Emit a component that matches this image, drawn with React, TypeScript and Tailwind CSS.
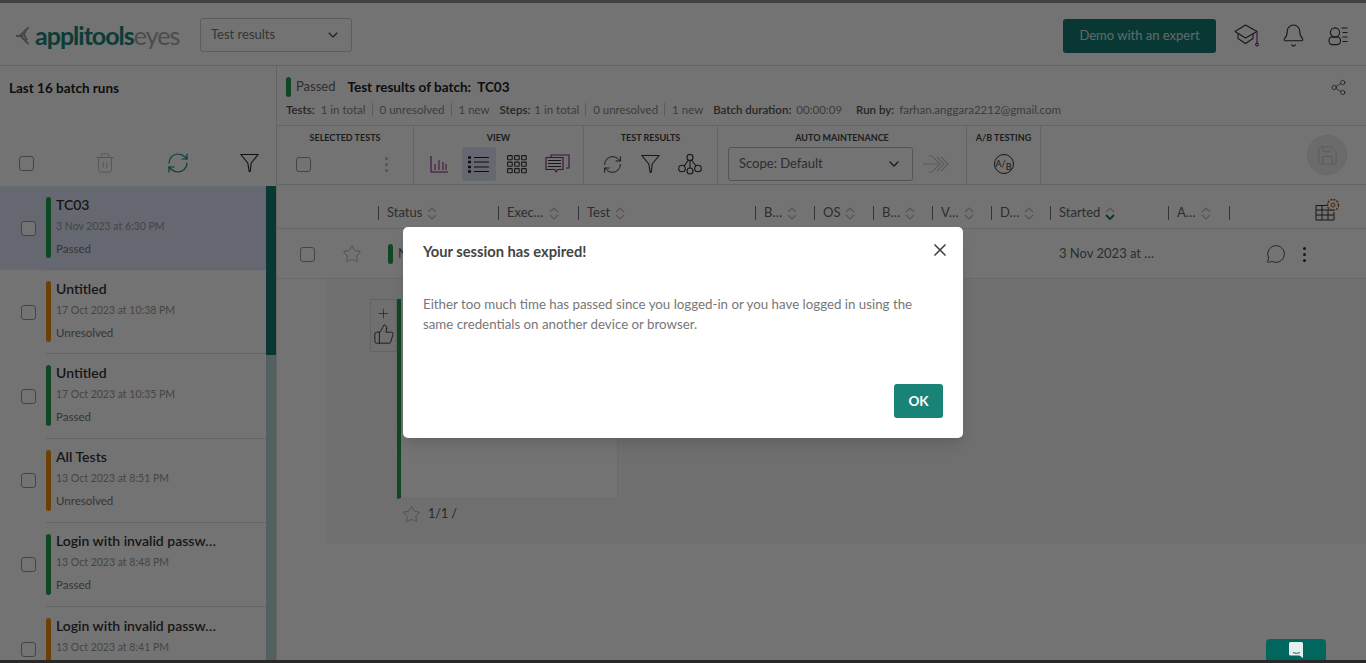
import { Bell, ChevronDown, MessageCircle, Plus, RefreshCw, Save, Share2, Star, ThumbsUp, Trash2, X } from "lucide-react"

interface Batch {
    name: string;
    date: string;
    status: "Passed" | "Unresolved";
}

const batches: Batch[] = [
    { name: "TC03", date: "3 Nov 2023 at 6:30 PM", status: "Passed" },
    { name: "Untitled", date: "17 Oct 2023 at 10:38 PM", status: "Unresolved" },
    { name: "Untitled", date: "17 Oct 2023 at 10:35 PM", status: "Passed" },
    { name: "All Tests", date: "13 Oct 2023 at 8:51 PM", status: "Unresolved" },
    { name: "Login with invalid passw…", date: "13 Oct 2023 at 8:48 PM", status: "Passed" },
    { name: "Login with invalid passw…", date: "13 Oct 2023 at 8:41 PM", status: "Unresolved" },
]

const columns = [
    { label: "Status", width: "w-[120px]" },
    { label: "Exec…", width: "w-[80px]" },
    { label: "Test", width: "w-[177px]" },
    { label: "B…", width: "w-[59px]" },
    { label: "OS", width: "w-[59px]" },
    { label: "B…", width: "w-[59px]" },
    { label: "V…", width: "w-[59px]" },
    { label: "D…", width: "w-[59px]" },
    { label: "Started", width: "w-[118px]", active: true },
    { label: "A…", width: "w-[61px]" },
]

const Check = ({ className = "" }: { className?: string }) => (
    <span className={`block w-[15px] h-[15px] rounded-[3px] border border-[#999] bg-white shrink-0 ${className}`} />
)

const Dots = ({ color = "bg-[#333]" }: { color?: string }) => (
    <span className="flex flex-col gap-[3px]">
        <i className={`block w-[3px] h-[3px] rounded-full ${color}`} />
        <i className={`block w-[3px] h-[3px] rounded-full ${color}`} />
        <i className={`block w-[3px] h-[3px] rounded-full ${color}`} />
    </span>
)

const Sort = ({ active }: { active?: boolean }) => (
    <svg width="10" height="13" viewBox="0 0 10 13" fill="none" className="ml-[5px] shrink-0">
        <path d="M1 5l4-4 4 4" stroke="#bbb" strokeWidth="1.2" />
        <path d="M1 8l4 4 4-4" stroke={active ? "#0f7a72" : "#bbb"} strokeWidth={active ? 1.8 : 1.2} />
    </svg>
)

const Section = ({ title, width, children }: { title: string; width: string; children: React.ReactNode }) => (
    <div className={`${width} shrink-0 border-r border-[#ddd] flex flex-col items-center pt-[6px]`}>
        <div className="text-[9px] leading-[12px] font-bold text-[#444]">{title}</div>
        <div className="flex-1 w-full flex items-center justify-center">{children}</div>
    </div>
)

const Stat = ({ children, last }: { children: React.ReactNode; last?: boolean }) => (
    <span className={`text-[#888] ${last ? "" : "border-r border-[#ccc] pr-[6px] mr-[7px]"}`}>{children}</span>
)

const FunnelIcon = ({ color }: { color: string }) => (
    <svg width="19" height="20" viewBox="0 0 19 20" fill="none" stroke={color} strokeWidth="1.1" strokeLinejoin="round">
        <path d="M0.8 1.5h17.4l-7 8.5-1 8.5h-1l-1.4-8.5z" />
    </svg>
)

const ChartIcon = () => (
    <svg width="19" height="18" viewBox="0 0 19 18" fill="none" stroke="#b0289a" strokeWidth="1.1">
        <path d="M1 1v16h17" stroke="#8a1f88" /><path d="M5 9v6M9 5v10M13 7v8M16 9v6" />
    </svg>
)

const ListIcon = () => (
    <svg width="21" height="17" viewBox="0 0 21 17" fill="none" stroke="#222" strokeWidth="1.2">
        <path d="M6 1.5h15M6 6h15M6 11h15M6 15.5h15" />
        <path d="M0 1.5h3M0 6h3M0 11h3M0 15.5h3" strokeWidth="2.4" />
    </svg>
)

const GridIcon = () => (
    <svg width="20" height="19" viewBox="0 0 20 19" fill="none" stroke="#333" strokeWidth="1.1">
        {[0.6, 7.6, 14.6].map((x) =>
            [0.6, 7.1, 13.6].map((y) => <rect key={`${x}-${y}`} x={x} y={y} width="4.6" height="4.2" rx="0.6" />)
        )}
    </svg>
)

const CommentsIcon = () => (
    <svg width="25" height="20" viewBox="0 0 25 20" fill="none" strokeWidth="1.1">
        <path d="M6 3V1h18v13h-3" stroke="#8a1f88" />
        <path d="M1 3.5h17v12h-5l-2 2.5-1-2.5H1z" stroke="#8a1f88" fill="white" />
        <path d="M3 6.5h13M3 9.5h13M3 12.5h13" stroke="#333" />
    </svg>
)

const FlowIcon = () => (
    <svg width="24" height="21" viewBox="0 0 24 21" fill="none" stroke="#333" strokeWidth="1.1">
        <circle cx="12" cy="3.5" r="3" /><circle cx="4" cy="14.5" r="3.3" /><circle cx="12" cy="17" r="3" /><circle cx="20" cy="14.5" r="3.3" />
        <path d="M10.5 6L6 12M13.5 6l4.5 6M12 6.5V14" />
    </svg>
)

const ArrowsIcon = () => (
    <svg width="28" height="20" viewBox="0 0 28 20" fill="none" stroke="#c8c8c8" strokeWidth="1.1">
        <path d="M0 10h15M10 3l7 7-7 7M14 3l7 7-7 7M18 3l7 7-7 7M6 2h4M6 18h4" />
    </svg>
)

const AbIcon = () => (
    <span className="flex items-center justify-center w-[20px] h-[20px] rounded-full border border-[#333] text-[#333] text-[9px] leading-none">
        <span className="-translate-y-[1px]">A/</span>
        <span className="translate-y-[2px]">B</span>
    </span>
)

const CapIcon = () => (
    <svg width="25" height="23" viewBox="0 0 25 23" fill="none" strokeWidth="1.1">
        <path d="M11.5 1L23 7.5 11.5 14 1 7.5z" stroke="#333" strokeLinejoin="round" />
        <path d="M4 10v4.5l7.5 5 7.5-5V10" stroke="#333" />
        <path d="M23 7.5V19" stroke="#8a1f88" />
        <circle cx="23" cy="20.5" r="1.4" stroke="#8a1f88" />
    </svg>
)

const UserListIcon = () => (
    <svg width="20" height="20" viewBox="0 0 20 20" fill="none" stroke="#333" strokeWidth="1.1">
        <circle cx="7" cy="6.5" r="4.6" /><rect x="1" y="11" width="11.5" height="7.6" rx="3.5" />
        <path d="M13.5 2h6M14.5 6.5h5M14.5 11h5M14.5 15.5h5" />
    </svg>
)

const TableGearIcon = () => (
    <svg width="25" height="23" viewBox="0 0 25 23" fill="none" stroke="#333" strokeWidth="1">
        <path d="M1 7.5h11M1 7.5V22h18V14M1 12h18M1 17h18M7 7.5V22M13 12v10" />
        <circle cx="18" cy="7" r="2" stroke="#a85a20" />
        <circle cx="18" cy="7" r="5.5" stroke="#a85a20" strokeDasharray="2.2 1" strokeWidth="1.4" />
    </svg>
)

const LogoMark = () => (
    <svg width="15" height="20" viewBox="0 0 15 20" fill="none" stroke="#9a9a9a" strokeWidth="1.8">
        <path d="M13.5 1.5L5 9.5l8.5 8.5M1 10h7M11 3.5L9 9l3 5" />
    </svg>
)

const App: React.FC = () => {
    return (
        <div className="relative h-[663px] w-[1366px] overflow-hidden bg-white flex flex-col font-['Lato','Liberation_Sans',sans-serif] text-[#333]">
            <div className="h-[3px] shrink-0 bg-[#8a8f96]" />

            <header className="h-[63px] shrink-0 border-b border-[#ddd] flex items-center pt-[3px] pl-[15px] pr-[18px]">
                <LogoMark />
                <div className="ml-[5px] flex items-baseline text-[25px] leading-none tracking-[-1px] w-[146px]">
                    <span className="font-bold text-[#17857d]">applitools</span>
                    <span className="text-[#a8a8a8]">eyes</span>
                </div>
                <div className="ml-[19px] -mt-[2px] w-[152px] h-[34px] border border-[#ccc] rounded-[3px] flex items-center justify-between pl-[10px] pr-[10px] text-[13px] text-[#777]">
                    Test results
                    <ChevronDown size={16} strokeWidth={1.6} className="text-[#444]" />
                </div>
                <button className="ml-auto w-[153px] h-[34px] bg-[#147d74] text-[#d6ebe8] text-[13px] rounded-[3px]">Demo with an expert</button>
                <span className="ml-[18px]"><CapIcon /></span>
                <Bell size={25} strokeWidth={1} className="ml-[22px] text-[#333]" />
                <span className="ml-[22px]"><UserListIcon /></span>
            </header>

            <div className="flex flex-1 min-h-0">
                <aside className="w-[277px] shrink-0 border-r border-[#ddd] flex flex-col">
                    <div className="h-[120px] shrink-0 flex flex-col justify-between">
                        <div className="pl-[9px] pt-[12px] text-[13.5px] font-bold text-[#222]">Last 16 batch runs</div>
                        <div className="flex items-center pl-[19px] pb-[11px]">
                            <Check />
                            <Trash2 size={22} strokeWidth={1} className="text-[#bbb] ml-[60px]" />
                            <RefreshCw size={24} strokeWidth={1.2} className="text-[#17857d] ml-[50px]" />
                            <span className="ml-[50px]"><FunnelIcon color="#222" /></span>
                        </div>
                    </div>
                    <div className="flex flex-1 min-h-0">
                        <ul className="flex-1 overflow-hidden">
                            {batches.map((batch, i) => (
                                <li key={batch.date} className={`h-[84.2px] flex items-center ${i === 0 ? "bg-[#dfe7f8]" : ""}`}>
                                    <Check className="ml-[21px]" />
                                    <div className="ml-[10px] flex-1 h-full border-b border-[#ddd] flex items-center">
                                        <span className={`w-[5px] h-[61px] rounded-[3px] ${batch.status === "Passed" ? "bg-[#1f9e4a]" : "bg-[#ef8e0c]"}`} />
                                        <div className="ml-[5px] mb-[4px]">
                                            <div className="text-[14px] leading-[18px] font-semibold text-[#333]">{batch.name}</div>
                                            <div className="mt-[5px] text-[10.5px] leading-[14px] text-[#999]">{batch.date}</div>
                                            <div className="mt-[9px] text-[11.5px] leading-[14px] text-[#777]">{batch.status}</div>
                                        </div>
                                    </div>
                                </li>
                            ))}
                        </ul>
                        <div className="w-[10px] shrink-0 bg-[#b9d6d4]">
                            <div className="h-[169px] bg-[#147d74]" />
                        </div>
                    </div>
                </aside>

                <main className="flex-1 min-w-0 flex flex-col">
                    <div className="h-[60px] shrink-0 border-b border-[#ddd] pl-[9px] pr-[19px]">
                        <div className="flex items-center pt-[11px] h-[31px]">
                            <span className="w-[5px] h-[20px] rounded-[3px] bg-[#1f9e4a]" />
                            <span className="ml-[5px] text-[13px] text-[#666]">Passed</span>
                            <span className="ml-[12px] text-[13.5px] font-bold text-[#222]">Test results of batch:&nbsp; TC03</span>
                            <Share2 size={17} strokeWidth={1} className="ml-auto text-[#333]" />
                        </div>
                        <div className="flex items-center mt-[6px] text-[11.5px] leading-[13px]">
                            <b className="font-semibold text-[#555] mr-[6px]">Tests:</b>
                            <Stat>1 in total</Stat><Stat>0 unresolved</Stat><Stat last>1 new</Stat>
                            <b className="font-semibold text-[#555] ml-[10px] mr-[4px]">Steps:</b>
                            <Stat>1 in total</Stat><Stat>0 unresolved</Stat><Stat last>1 new</Stat>
                            <b className="font-semibold text-[#555] ml-[10px] mr-[5px]">Batch duration:</b>
                            <Stat last>00:00:09</Stat>
                            <b className="font-semibold text-[#555] ml-[14px] mr-[5px]">Run by:</b>
                            <Stat last>farhan.anggara2212@gmail.com</Stat>
                        </div>
                    </div>

                    <div className="h-[59px] shrink-0 border-b border-[#ddd] flex items-stretch">
                        <Section title="SELECTED TESTS" width="w-[137px]">
                            <div className="w-full flex items-center justify-between pl-[19px] pr-[25px]">
                                <Check />
                                <Dots color="bg-[#bbb]" />
                            </div>
                        </Section>
                        <Section title="VIEW" width="w-[170px]">
                            <div className="flex items-center pl-[2px]">
                                <ChartIcon />
                                <span className="ml-[13px] w-[34px] h-[34px] rounded-[3px] bg-[#dfe7f8] flex items-center justify-center"><ListIcon /></span>
                                <span className="ml-[11px]"><GridIcon /></span>
                                <span className="ml-[18px]"><CommentsIcon /></span>
                            </div>
                        </Section>
                        <Section title="TEST RESULTS" width="w-[134px]">
                            <div className="flex items-center gap-[18px] pl-[3px]">
                                <RefreshCw size={21} strokeWidth={1.1} className="text-[#333]" />
                                <FunnelIcon color="#333" />
                                <FlowIcon />
                            </div>
                        </Section>
                        <Section title="AUTO MAINTENANCE" width="w-[249px]">
                            <div className="flex items-center pr-[5px]">
                                <div className="w-[185px] h-[34px] border border-[#bbb] rounded-[3px] flex items-center justify-between pl-[10px] pr-[10px] text-[13px] text-[#666]">
                                    Scope: Default
                                    <ChevronDown size={16} strokeWidth={1.8} className="text-[#333]" />
                                </div>
                                <span className="ml-[10px]"><ArrowsIcon /></span>
                            </div>
                        </Section>
                        <Section title="A/B TESTING" width="w-[74px]"><AbIcon /></Section>
                        <div className="flex-1 flex items-center justify-end pr-[19px]">
                            <span className="w-[40px] h-[40px] rounded-full bg-[#eee] border border-[#e3e3e3] flex items-center justify-center">
                                <Save size={23} strokeWidth={1} className="text-[#c9c9c9]" />
                            </span>
                        </div>
                    </div>

                    <div className="h-[44px] shrink-0 border-b border-[#ddd] flex items-center pt-[13px] pl-[101px] pr-[26px]">
                        {columns.map((col, i) => (
                            <div key={i} className={`${col.width} shrink-0 h-[14px] border-l border-[#777] flex items-center pl-[8px] text-[13px] text-[#666]`}>
                                {col.label}<Sort active={col.active} />
                            </div>
                        ))}
                        <span className="h-[14px] border-l border-[#777]" />
                        <span className="ml-auto -mt-[7px]"><TableGearIcon /></span>
                    </div>

                    <div className="h-[50px] shrink-0 border-b border-[#e8e8e8] flex items-center pt-[1px] pl-[23px] pr-[60px]">
                        <Check />
                        <Star size={20} strokeWidth={0.9} className="ml-[27px] text-[#999]" />
                        <span className="ml-[26px] w-[5px] h-[20px] rounded-[3px] bg-[#1f9e4a]" />
                        <span className="ml-[5px] text-[13px] text-[#666]">New</span>
                        <span className="ml-auto w-[118px] text-[13px] text-[#666]">3 Nov 2023 at …</span>
                        <MessageCircle size={20} strokeWidth={1} className="ml-[89px] text-[#333]" />
                        <span className="ml-[17px]"><Dots /></span>
                    </div>

                    <div className="ml-[49px] h-[265px] shrink-0 bg-[#f5f5f5] pl-[44px] pt-[20px]">
                        <div className="flex items-start">
                            <div className="w-[27px] h-[53px] border border-[#ddd] flex flex-col items-center">
                                <Plus size={15} strokeWidth={1} className="mt-[6px] text-[#333]" />
                                <ThumbsUp size={22} strokeWidth={1} className="mt-[2px] text-[#333]" />
                            </div>
                            <div className="w-[221px] h-[200px] bg-white border-l-[4px] border-b border-r border-l-[#1f9e4a] border-b-[#eee] border-r-[#eee]" />
                        </div>
                        <div className="ml-[32px] mt-[6px] flex items-center text-[12.5px] text-[#555]">
                            <Star size={19} strokeWidth={0.9} className="text-[#999]" />
                            <span className="ml-[7px]">1/1 /</span>
                        </div>
                    </div>
                </main>
            </div>

            <div className="h-[3px] shrink-0 bg-[#5a5a5a]" />

            <div className="absolute inset-0 bg-black/55 flex justify-center pt-[227px]">
                <div className="w-[560px] h-[211px] bg-white rounded-[5px] shadow-lg flex flex-col pl-[20px] pr-[20px] pt-[15px]">
                    <div className="flex items-start justify-between h-[20px]">
                        <h2 className="-mt-[1px] text-[14.7px] leading-[20px] font-bold text-[#444]">Your session has expired!</h2>
                        <X size={20} strokeWidth={2} className="-mt-[2px] -mr-[7px] text-[#444]" />
                    </div>
                    <p className="mt-[32px] text-[13.3px] leading-[20px] text-[#777]">
                        Either too much time has passed since you logged-in or you have logged in using the
                        <br />
                        same credentials on another device or browser.
                    </p>
                    <button className="self-end mt-[50px] w-[49px] h-[34px] bg-[#1a8378] text-white text-[13.5px] font-bold rounded-[3px]">OK</button>
                </div>
            </div>

            <div className="absolute bottom-[3px] left-[1266px] w-[60px] h-[21px] bg-[#00665e] rounded-t-[4px] flex justify-center pt-[3px]">
                <svg width="15" height="16" viewBox="0 0 15 16">
                    <path d="M1.5 0h11A1.5 1.5 0 0 1 14 1.5V16l-3.5-2.5h-9A1.5 1.5 0 0 1 0 12V1.5A1.5 1.5 0 0 1 1.5 0z" fill="#e6f0ef" />
                    <path d="M4 10.5c2 1 5 1 7 0" stroke="#00665e" strokeWidth="1" fill="none" />
                </svg>
            </div>
        </div>
    )
}

export default App
